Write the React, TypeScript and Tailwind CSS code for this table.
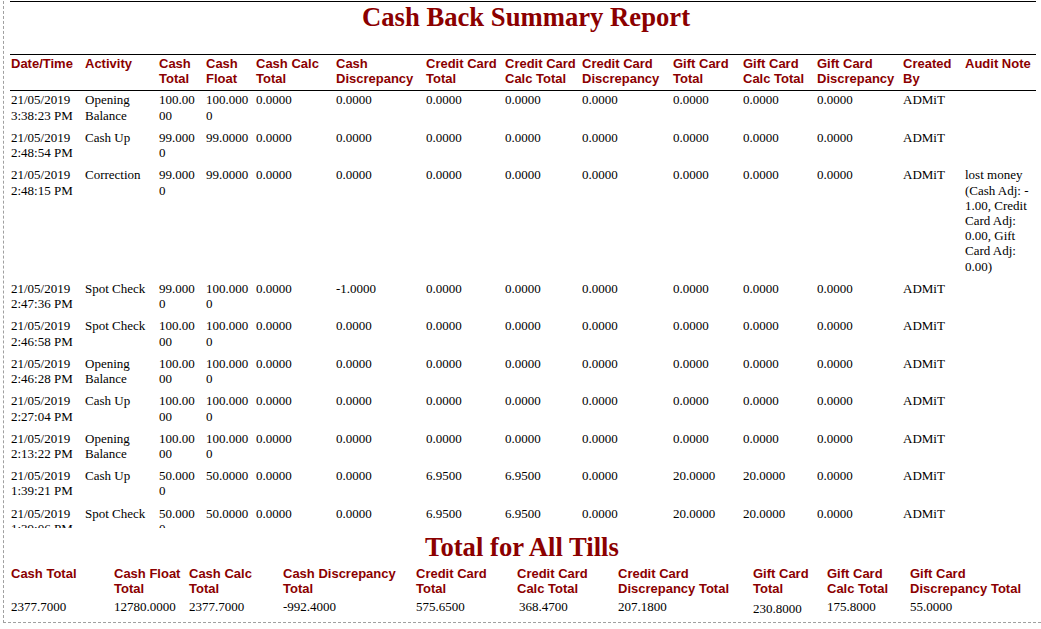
import React from "react";

type Row = {
  date: string;
  time: string;
  activity: string;
  cash: string[];
  card: string[];
  gift: string[];
  by: string;
  note?: React.ReactNode;
};

const COLS = [
  { label: "Date/Time", w: "w-[74px]" },
  { label: "Activity", w: "w-[74px]" },
  { label: "Cash Total", w: "w-[47px]" },
  { label: "Cash Float", w: "w-[50px]" },
  { label: "Cash Calc Total", w: "w-[80px]" },
  { label: "Cash Discrepancy", w: "w-[90px]" },
  { label: "Credit Card Total", w: "w-[79px]" },
  { label: "Credit Card Calc Total", w: "w-[77px]" },
  { label: "Credit Card Discrepancy", w: "w-[91px]" },
  { label: "Gift Card Total", w: "w-[70px]" },
  { label: "Gift Card Calc Total", w: "w-[74px]" },
  { label: "Gift Card Discrepancy", w: "w-[86px]" },
  { label: "Created By", w: "w-[62px]" },
  { label: "Audit Note", w: "w-[72px]" },
];

const Z = "0.0000";

const ROWS: Row[] = [
  { date: "21/05/2019", time: "3:38:23 PM", activity: "Opening Balance", cash: ["100.0000", "100.0000", Z, Z], card: [Z, Z, Z], gift: [Z, Z, Z], by: "ADMiT" },
  { date: "21/05/2019", time: "2:48:54 PM", activity: "Cash Up", cash: ["99.0000", "99.0000", Z, Z], card: [Z, Z, Z], gift: [Z, Z, Z], by: "ADMiT" },
  {
    date: "21/05/2019",
    time: "2:48:15 PM",
    activity: "Correction",
    cash: ["99.0000", "99.0000", Z, Z],
    card: [Z, Z, Z],
    gift: [Z, Z, Z],
    by: "ADMiT",
    note: (
      <>
        lost money (Cash Adj: -<wbr />1.00, Credit Card Adj: 0.00, Gift Card Adj: 0.00)
      </>
    ),
  },
  { date: "21/05/2019", time: "2:47:36 PM", activity: "Spot Check", cash: ["99.0000", "100.0000", Z, "-1.0000"], card: [Z, Z, Z], gift: [Z, Z, Z], by: "ADMiT" },
  { date: "21/05/2019", time: "2:46:58 PM", activity: "Spot Check", cash: ["100.0000", "100.0000", Z, Z], card: [Z, Z, Z], gift: [Z, Z, Z], by: "ADMiT" },
  { date: "21/05/2019", time: "2:46:28 PM", activity: "Opening Balance", cash: ["100.0000", "100.0000", Z, Z], card: [Z, Z, Z], gift: [Z, Z, Z], by: "ADMiT" },
  { date: "21/05/2019", time: "2:27:04 PM", activity: "Cash Up", cash: ["100.0000", "100.0000", Z, Z], card: [Z, Z, Z], gift: [Z, Z, Z], by: "ADMiT" },
  { date: "21/05/2019", time: "2:13:22 PM", activity: "Opening Balance", cash: ["100.0000", "100.0000", Z, Z], card: [Z, Z, Z], gift: [Z, Z, Z], by: "ADMiT" },
  { date: "21/05/2019", time: "1:39:21 PM", activity: "Cash Up", cash: ["50.0000", "50.0000", Z, Z], card: ["6.9500", "6.9500", Z], gift: ["20.0000", "20.0000", Z], by: "ADMiT" },
  { date: "21/05/2019", time: "1:39:06 PM", activity: "Spot Check", cash: ["50.0000", "50.0000", Z, Z], card: ["6.9500", "6.9500", Z], gift: ["20.0000", "20.0000", Z], by: "ADMiT" },
];

// pad = value cell padding; a couple of values sit slightly off in the source report
const TOTALS = [
  { label: "Cash Total", value: "2377.7000", w: "w-[103px]", pad: "pl-px pt-[3.4px]" },
  { label: "Cash Float Total", value: "12780.0000", w: "w-[75px]", pad: "pl-px pt-[3.4px]" },
  { label: "Cash Calc Total", value: "2377.7000", w: "w-[94px]", pad: "pl-px pt-[3.4px]" },
  { label: "Cash Discrepancy Total", value: "-992.4000", w: "w-[133px]", pad: "pl-px pt-[3.4px]" },
  { label: "Credit Card Total", value: "575.6500", w: "w-[101px]", pad: "pl-px pt-[3.4px]" },
  { label: "Credit Card Calc Total", value: "368.4700", w: "w-[101px]", pad: "pl-[3px] pt-[3.4px]" },
  { label: "Credit Card Discrepancy Total", value: "207.1800", w: "w-[135px]", pad: "pl-px pt-[3.4px]" },
  { label: "Gift Card Total", value: "230.8000", w: "w-[74px]", pad: "pl-px pt-[5.4px]" },
  { label: "Gift Card Calc Total", value: "175.8000", w: "w-[83px]", pad: "pl-px pt-[3.4px]" },
  { label: "Gift Card Discrepancy Total", value: "55.0000", w: "w-[127px]", pad: "pl-px pt-[3.4px]" },
];

const th =
  "border-y border-black pl-px pr-[4px] pt-px pb-[4px] text-left align-top font-['Liberation_Sans',Arial,sans-serif] text-[13px] font-bold leading-[15px] text-[#8b0000]";
const td =
  "pl-px pr-[4px] pt-[1.4px] pb-[5.7px] align-top font-['Liberation_Serif','Times_New_Roman',serif] text-[13px] leading-[15.2px] text-black [overflow-wrap:anywhere]";

function ReportTitle({ children }: { children: React.ReactNode }) {
  return (
    <h1 className="text-center font-['Liberation_Serif','Times_New_Roman',serif] text-[26.67px] font-bold leading-[30px] text-[#8b0000]">
      {children}
    </h1>
  );
}

export default function App() {
  return (
    <div className="h-[629px] w-[1041px] overflow-hidden bg-white">
      <div className="ml-[3px] h-[622px] border-b border-l border-dashed border-[#a0a0a0]">
        <div className="ml-[6px] mt-px w-[1026px] border-t border-black">
          <div className="h-[52px] pl-[6px]">
            <ReportTitle>Cash Back Summary Report</ReportTitle>
          </div>

          {/* detail rows — clipped like the report viewer page */}
          <div className="h-[474px] overflow-hidden">
            <table className="w-[1026px] table-fixed border-separate border-spacing-0">
              <colgroup>
                {COLS.map((c) => (
                  <col key={c.label} className={c.w} />
                ))}
              </colgroup>
              <thead>
                <tr>
                  {COLS.map((c) => (
                    <th key={c.label} className={th}>
                      {c.label}
                    </th>
                  ))}
                </tr>
              </thead>
              <tbody>
                {ROWS.map((r, i) => (
                  <tr key={i}>
                    <td className={td}>
                      {r.date}
                      <br />
                      {r.time}
                    </td>
                    <td className={td}>{r.activity}</td>
                    {[...r.cash, ...r.card, ...r.gift].map((v, j) => (
                      <td key={j} className={td}>
                        {v}
                      </td>
                    ))}
                    <td className={td}>{r.by}</td>
                    <td className={td}>{r.note}</td>
                  </tr>
                ))}
              </tbody>
            </table>
          </div>

          <div className="h-[39px] pr-[2px] pt-[4px]">
            <ReportTitle>Total for All Tills</ReportTitle>
          </div>

          <table className="w-[1026px] table-fixed border-separate border-spacing-0">
            <colgroup>
              {TOTALS.map((t) => (
                <col key={t.label} className={t.w} />
              ))}
            </colgroup>
            <thead>
              <tr>
                {TOTALS.map((t) => (
                  <th
                    key={t.label}
                    className="pl-px pr-[4px] text-left align-top font-['Liberation_Sans',Arial,sans-serif] text-[13px] font-bold leading-[14.5px] text-[#8b0000]"
                  >
                    {t.label}
                  </th>
                ))}
              </tr>
            </thead>
            <tbody>
              <tr>
                {TOTALS.map((t) => (
                  <td
                    key={t.label}
                    className={`pr-[4px] align-top font-['Liberation_Serif','Times_New_Roman',serif] text-[13px] leading-[15.2px] text-black ${t.pad}`}
                  >
                    {t.value}
                  </td>
                ))}
              </tr>
            </tbody>
          </table>
        </div>
      </div>
    </div>
  );
}
